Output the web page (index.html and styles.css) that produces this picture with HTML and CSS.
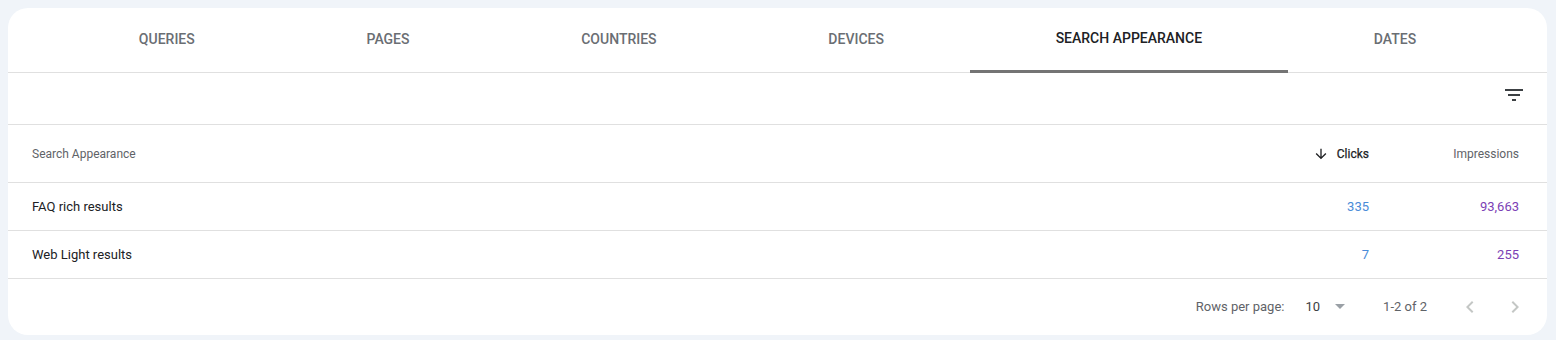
FILE: index.html
```html
<!DOCTYPE html>
<html>
<head>
<meta charset="utf-8">
<link rel="stylesheet" href="styles.css">
</head>
<body>
<div class="card">
  <div class="tabs">
    <div class="tab">QUERIES</div>
    <div class="tab">PAGES</div>
    <div class="tab">COUNTRIES</div>
    <div class="tab">DEVICES</div>
    <div class="tab active">SEARCH APPEARANCE</div>
    <div class="tab">DATES</div>
  </div>
  <div class="toolbar">
    <svg class="filter" width="24" height="24" viewBox="0 0 24 24"><path d="M3 6h18v2H3zM6 11h12v2H6zM10 16h4v2h-4z" fill="#3c4043"/></svg>
  </div>
  <div class="row head">
    <div class="c-name">Search Appearance</div>
    <div class="c-clicks sorted">
      <svg width="16" height="16" viewBox="0 0 24 24"><path d="M20 12l-1.41-1.41L13 16.17V4h-2v12.17l-5.58-5.59L4 12l8 8 8-8z" fill="#202124"/></svg>
      <span>Clicks</span>
    </div>
    <div class="c-impr">Impressions</div>
  </div>
  <div class="row">
    <div class="c-name">FAQ rich results</div>
    <div class="c-clicks num-clicks">335</div>
    <div class="c-impr num-impr">93,663</div>
  </div>
  <div class="row">
    <div class="c-name">Web Light results</div>
    <div class="c-clicks num-clicks">7</div>
    <div class="c-impr num-impr">255</div>
  </div>
  <div class="footer">
    <span class="rpp">Rows per page:</span>
    <span class="select"><span class="val">10</span><span class="caret"></span></span>
    <span class="range">1-2 of 2</span>
    <span class="nav">
      <svg width="24" height="24" viewBox="0 0 24 24"><path d="M15.41 7.41L14 6l-6 6 6 6 1.41-1.41L10.83 12z" fill="#c4c7c5"/></svg>
      <svg width="24" height="24" viewBox="0 0 24 24"><path d="M10 6L8.59 7.41 13.17 12l-4.58 4.59L10 18l6-6z" fill="#c4c7c5"/></svg>
    </span>
  </div>
</div>
</body>
</html>
```
FILE: styles.css
```css
html, body { margin: 0; padding: 0; }
body {
  background: #f0f4f9;
  padding: 8px 9px 0 8px;
  font-family: Roboto, "Noto Sans", Arial, sans-serif;
  color: #202124;
}
.card {
  background: #fff;
  border-radius: 20px;
  height: 327px;
  overflow: hidden;
  display: flex;
  flex-direction: column;
}
.tabs {
  display: flex;
  height: 64px;
  padding: 0 45px;
  border-bottom: 1px solid #e0e0e0;
  flex-shrink: 0;
}
.tab {
  flex: 1 1 auto;
  display: flex;
  align-items: center;
  justify-content: center;
  font-size: 14px;
  font-weight: 500;
  color: #6a6e73;
  letter-spacing: 0;
  padding-bottom: 2px;
  box-sizing: border-box;
  border-bottom: 2px solid transparent;
  margin-bottom: -1px;
}
.tab.active {
  color: #202124;
  border-bottom: 3px solid #747474;
}
.toolbar {
  height: 52px;
  border-bottom: 1px solid #e0e0e0;
  display: flex;
  align-items: center;
  justify-content: flex-end;
  padding-right: 21px;
  padding-bottom: 7px;
  box-sizing: border-box;
  flex-shrink: 0;
}
.row {
  display: flex;
  align-items: center;
  height: 47px;
  border-bottom: 1px solid #e0e0e0;
  padding: 0 28px 0 24px;
  font-size: 13px;
  flex-shrink: 0;
}
.row.head {
  height: 57px;
  font-size: 12px;
  color: #5f6368;
}
.c-name { flex: 1; }
.c-clicks {
  width: 150px;
  text-align: right;
  display: flex;
  justify-content: flex-end;
  align-items: center;
}
.c-impr {
  width: 150px;
  text-align: right;
  display: flex;
  justify-content: flex-end;
}
.sorted { color: #202124; font-weight: 500; }
.sorted span { font-weight: 400; -webkit-text-stroke: 0.25px #202124; }
.sorted svg { margin-right: 8px; }
.num-clicks { color: #4a8bd8; }
.num-impr { color: #7b3fb5; }
.footer {
  flex: 1;
  display: flex;
  align-items: center;
  justify-content: flex-end;
  font-size: 13px;
  color: #5f6368;
  padding-right: 20px;
  padding-bottom: 1px;
}
.rpp { margin-right: 21px; }
.select { display: flex; align-items: center; }
.val { color: #3c4043; font-size: 13px; }
.caret {
  width: 0; height: 0;
  border-left: 5px solid transparent;
  border-right: 5px solid transparent;
  border-top: 5px solid #9aa0a6;
  margin-left: 15px;
  margin-right: 38px;
}
.range { color: #5f6368; margin-right: 31px; }
.nav { display: flex; gap: 21px; }
```
